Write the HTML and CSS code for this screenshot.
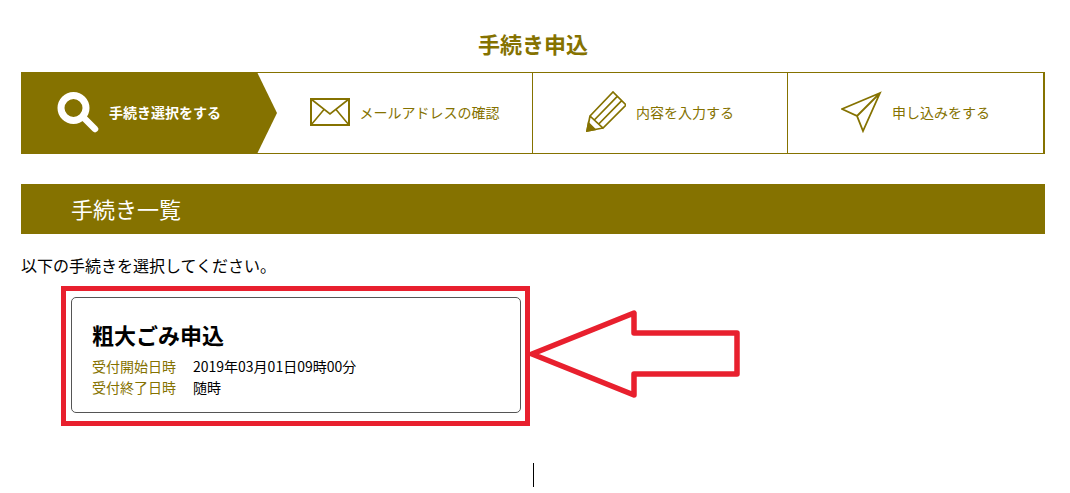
FILE: index.html
```html
<!DOCTYPE html>
<html lang="ja">
<head>
  <meta charset="UTF-8">
  <meta name="viewport" content="width=device-width, initial-scale=1.0">
  <title>手続き申込</title>
  <link rel="stylesheet" href="styles.css">
</head>
<body>
  <div class="container">
    <h1 class="page-title">手続き申込</h1>

    <ol class="steps">
      <li class="step active">
        <svg class="icon" width="42" height="42" viewBox="0 0 42 42" fill="none" stroke="#fff">
          <circle cx="16.5" cy="17" r="12.5" stroke-width="7"/>
          <path d="M27 27l11 11" stroke-width="6.5" stroke-linecap="round"/>
        </svg>
        <span>手続き選択をする</span>
      </li>
      <li class="step">
        <svg class="icon" width="40" height="28" viewBox="0 0 40 28" fill="none" stroke="#857200" stroke-width="1.6">
          <rect x="1" y="1" width="38" height="26" stroke-width="2"/>
          <path d="M1 1l19 15L39 1M1 27l13-15.500M39 27L26 11.500"/>
        </svg>
        <span>メールアドレスの確認</span>
      </li>
      <li class="step">
        <svg class="icon" width="40" height="42" viewBox="0 0 40 42" fill="none" stroke="#857200" stroke-width="1.7">
          <path d="M4 25L27 1l13 13-23 23-13-12zM8.300 29L31.300 5.300M12.700 33L35.700 9.700M4 25L1 40l16-3"/>
          <path d="M1 40l1.500-8 6.500 6.500z" fill="#857200"/>
        </svg>
        <span>内容を入力する</span>
      </li>
      <li class="step">
        <svg class="icon" width="41" height="42" viewBox="0 0 41 42" fill="none" stroke="#857200" stroke-width="1.8">
          <path d="M39 2L1 18l15 7 6 15zM16 25L39 2"/>
        </svg>
        <span>申し込みをする</span>
      </li>
    </ol>

    <h2 class="section-title">手続き一覧</h2>
    <p class="lead">以下の手続きを選択してください。</p>

    <div class="card">
      <h3 class="card-title">粗大ごみ申込</h3>
      <dl class="card-meta">
        <dt>受付開始日時</dt>
        <dd>2019年03月01日09時00分</dd>
        <dt>受付終了日時</dt>
        <dd>随時</dd>
      </dl>
    </div>
  </div>

  <!-- annotation drawn over the screenshot -->
  <div class="mark-frame"></div>
  <svg class="mark-arrow" width="220" height="96" viewBox="0 0 220 96" fill="none">
    <path d="M5 47L107 6v20h103v41H107v21z" stroke="#e8202e" stroke-width="5.500" stroke-linejoin="round"/>
  </svg>
  <div class="text-cursor"></div>
</body>
</html>
```

FILE: styles.css
```css
/* General Styling */
* {
  box-sizing: border-box;
}

body {
  margin: 0;
  background: #fff;
  color: #000;
  font-family: "Noto Sans CJK JP", "Noto Sans", sans-serif;
}

.container {
  padding: 28px 25px 0 21px;
}

.page-title {
  margin: 0 0 14px;
  font-size: 22px;
  line-height: 30px;
  font-weight: 700;
  text-align: center;
  color: #857200;
}

/* Steps */
.steps {
  display: grid;
  grid-template-columns: 256px 255px 255px 1fr;
  height: 82px;
  margin: 0;
  padding: 0;
  list-style: none;
  border-top: 1px solid #857200;
  border-bottom: 1px solid #857200;
  border-right: 2px solid #857200;
}

.step {
  display: flex;
  align-items: center;
  justify-content: center;
  gap: 10px;
  padding-bottom: 2px;
  border-left: 1px solid #857200;
  font-size: 14px;
  color: #857200;
}

.step.active {
  margin: -1px 0;
  padding-right: 20px;
  border-left: 0;
  background: #857200;
  color: #fff;
  font-weight: 700;
  clip-path: polygon(0 0, 236px 0, 100% 50%, 236px 100%, 0 100%);
}

.step.active + .step {
  border-left: 0;
}

.icon {
  flex: none;
}

/* Section */
.section-title {
  height: 50px;
  margin: 30px 0 0;
  padding-left: 50px;
  background: #857200;
  color: #fff;
  font-size: 22px;
  font-weight: 400;
  line-height: 48px;
}

.lead {
  margin: 19px 0 0;
  font-size: 16px;
  line-height: 24px;
}

/* Card */
.card {
  width: 450px;
  height: 116px;
  margin: 20px 0 0 50px;
  padding: 20px 20px 0;
  border: 1px solid #555;
  border-radius: 5px;
}

.card-title {
  margin: 0;
  font-size: 22px;
  line-height: 32px;
  font-weight: 700;
}

.card-meta {
  display: grid;
  grid-template-columns: 101px 1fr;
  margin: 6px 0 0;
  font-size: 14px;
  line-height: 21px;
}

.card-meta dt {
  color: #857200;
}

.card-meta dd {
  margin: 0;
}

/* Annotation */
.mark-frame {
  position: absolute;
  left: 61px;
  top: 286px;
  width: 469px;
  height: 140px;
  border: 5px solid #e8202e;
}

.mark-arrow {
  position: absolute;
  left: 527px;
  top: 307px;
}

.text-cursor {
  position: absolute;
  left: 533px;
  top: 463px;
  width: 1px;
  height: 24px;
  background: #000;
}
```
